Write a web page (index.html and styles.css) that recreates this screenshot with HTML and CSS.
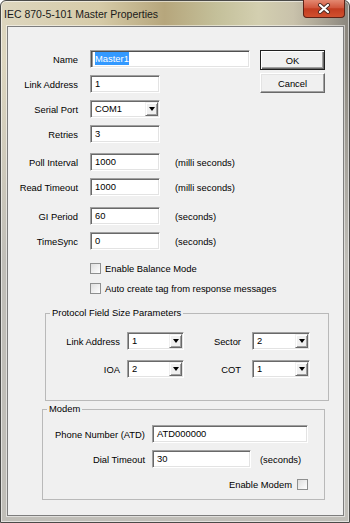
FILE: index.html
```html
<!DOCTYPE html>
<html lang="en">
<head>
    <meta charset="UTF-8">
    <title>IEC 870-5-101 Master Properties</title>
    <link rel="stylesheet" href="styles.css">
</head>
<body>
<div class="window">
    <div class="titlebar">
        <span class="title">IEC 870-5-101 Master Properties</span>
        <div class="close">
            <svg width="14" height="11" viewBox="0 0 14 11">
                <path d="M3 2 L11 9 M11 2 L3 9" stroke="#4b2a22" stroke-width="4" stroke-linecap="round"/>
                <path d="M3 2 L11 9 M11 2 L3 9" stroke="#fff" stroke-width="2.2" stroke-linecap="round"/>
            </svg>
        </div>
    </div>
    <div class="client">
        <div class="top">
            <div class="form">
                <div class="row">
                    <span class="lbl">Name</span>
                    <div class="field focus w160"><span class="selected">Master1</span></div>
                </div>
                <div class="row gap7">
                    <span class="lbl">Link Address</span>
                    <div class="field w70">1</div>
                </div>
                <div class="row gap7">
                    <span class="lbl">Serial Port</span>
                    <div class="field combo w70"><span class="val">COM1</span><span class="arrow"></span></div>
                </div>
                <div class="row gap7">
                    <span class="lbl">Retries</span>
                    <div class="field w70">3</div>
                </div>
                <div class="row gap10">
                    <span class="lbl">Poll Interval</span>
                    <div class="field w70">1000</div>
                    <span class="unit">(milli seconds)</span>
                </div>
                <div class="row gap7">
                    <span class="lbl">Read Timeout</span>
                    <div class="field w70">1000</div>
                    <span class="unit">(milli seconds)</span>
                </div>
                <div class="row gap11">
                    <span class="lbl">GI Period</span>
                    <div class="field w70">60</div>
                    <span class="unit">(seconds)</span>
                </div>
                <div class="row gap7">
                    <span class="lbl">TimeSync</span>
                    <div class="field w70">0</div>
                    <span class="unit">(seconds)</span>
                </div>
            </div>
            <div class="buttons">
                <button class="btn default">OK</button>
                <button class="btn">Cancel</button>
            </div>
        </div>

        <div class="check-row first"><span class="check"></span>Enable Balance Mode</div>
        <div class="check-row"><span class="check"></span>Auto create tag from response messages</div>

        <fieldset class="group proto">
            <legend>Protocol Field Size Parameters</legend>
            <div class="proto-grid">
                <span class="plbl">Link Address</span>
                <div class="field combo"><span class="val">1</span><span class="arrow"></span></div>
                <span class="plbl wide">Sector</span>
                <div class="field combo"><span class="val">2</span><span class="arrow"></span></div>
                <span class="plbl">IOA</span>
                <div class="field combo"><span class="val">2</span><span class="arrow"></span></div>
                <span class="plbl wide">COT</span>
                <div class="field combo"><span class="val">1</span><span class="arrow"></span></div>
            </div>
        </fieldset>

        <fieldset class="group modem">
            <legend>Modem</legend>
            <div class="mrow">
                <span class="mlbl">Phone Number (ATD)</span>
                <div class="field w156">ATD000000</div>
            </div>
            <div class="mrow gap7">
                <span class="mlbl">Dial Timeout</span>
                <div class="field w99">30</div>
                <span class="munit">(seconds)</span>
            </div>
            <div class="enable-row">Enable Modem <span class="check"></span></div>
        </fieldset>
    </div>
</div>
</body>
</html>
```

FILE: styles.css
```css
* {
    box-sizing: border-box;
}
body {
    margin: 0;
    font-family: "Liberation Sans", Arial, sans-serif;
    font-size: 9.4px;
    color: #000;
}
.window {
    width: 350px;
    height: 523px;
    display: flex;
    flex-direction: column;
    padding: 0 5px 6px 6px;
    border: 1px solid #4a4a48;
    border-radius: 6px 6px 0 0;
    background:
        linear-gradient(to bottom, rgba(196,194,188,0) 0, rgba(196,194,188,0) 60px, rgba(192,190,184,1) 260px),
        linear-gradient(90deg, #ddd6bf 0%, #d6cba8 28%, #b6a67c 47%, #c4c09a 62%, #d3cfb0 74%, #c9c2ab 84%, #a39d8f 94%, #8a867e 100%);
    box-shadow: inset 0 0 0 1px rgba(255,255,255,0.55);
}
.titlebar {
    height: 25px;
    margin: 0 -5px 0 -6px;
    display: flex;
    justify-content: space-between;
    align-items: flex-start;
}
.title {
    font-size: 10.5px;
    line-height: 12px;
    padding: 7px 0 0 3px;
    color: #1a1a1a;
}
.close {
    width: 42px;
    height: 18px;
    margin: -1px 4px 0 0;
    border: 1px solid #5e2216;
    border-top: none;
    border-radius: 0 0 4px 4px;
    background-color: #c23c20;
    background-image: linear-gradient(to bottom, rgba(255,200,180,0.55) 0%, rgba(255,170,150,0.25) 45%, rgba(0,0,0,0) 52%, rgba(255,140,90,0.25) 100%);
    display: flex;
    align-items: center;
    justify-content: center;
}
.close svg {
    display: block;
}
.client {
    flex: 1;
    background: #f0f0f0;
    border: 1px solid #7d7d7d;
    box-shadow: 0 0 0 1px rgba(255,255,255,0.5);
}
.top {
    display: flex;
    padding-top: 23px;
}
.form {
    width: 242px;
}
.row {
    display: flex;
    align-items: center;
    height: 18px;
}
.gap7 { margin-top: 7px; }
.gap10 { margin-top: 10px; }
.gap11 { margin-top: 11px; }
.lbl {
    width: 70px;
    text-align: right;
    margin-right: 12px;
}
.unit {
    margin-left: 15px;
}
.field {
    height: 18px;
    background: #fff;
    border: 1px solid;
    border-color: #a0a0a0 #ffffff #ffffff #a0a0a0;
    box-shadow: inset 1px 1px 0 #696969, inset -1px -1px 0 #e3e3e3;
    padding: 0 4px;
    line-height: 16px;
    white-space: nowrap;
    overflow: hidden;
}
.field.focus {
    box-shadow: inset 1px 1px 0 #505050, inset 2px 0 0 #9a9a9a, inset -1px -1px 0 #e3e3e3;
}
.w160 { width: 160px; }
.w70 { width: 70px; }
.w156 { width: 156px; }
.w99 { width: 99px; }
.selected {
    background: #3399ff;
    color: #fff;
    padding: 1px 0;
}
.combo {
    display: flex;
    padding-right: 0;
}
.combo .val {
    flex: 1;
}
.arrow {
    width: 13px;
    height: 14px;
    margin: 1px 1px 1px 0;
    background: #f0f0f0;
    border: 1px solid;
    border-color: #f0f0f0 #696969 #696969 #f0f0f0;
    box-shadow: inset 1px 1px 0 #fff, inset -1px -1px 0 #a0a0a0;
    display: flex;
    align-items: center;
    justify-content: center;
}
.arrow::after {
    content: "";
    border-top: 4px solid #000;
    border-left: 3.5px solid transparent;
    border-right: 3.5px solid transparent;
}
.buttons {
    margin-left: 10px;
    display: flex;
    flex-direction: column;
    gap: 3px;
}
.btn {
    width: 65px;
    height: 20px;
    padding: 0;
    font: inherit;
    color: #000;
    background: #f0f0f0;
    border: 1px solid;
    border-color: #fff #696969 #696969 #fff;
    box-shadow: inset -1px -1px 0 #a0a0a0, inset 1px 1px 0 #e3e3e3;
}
.btn.default {
    border: 1px solid #202020;
    box-shadow: inset 1px 1px 0 #fff, inset -1px -1px 0 #696969, inset -2px -2px 0 #a0a0a0;
}
.check-row {
    display: flex;
    align-items: center;
    height: 11px;
    margin-left: 82px;
    margin-top: 9px;
}
.check-row.first {
    margin-top: 13px;
}
.check {
    width: 11px;
    height: 11px;
    border: 1px solid #8e8f8f;
    background: linear-gradient(135deg, #dedede, #ffffff);
    margin-right: 4px;
    flex: none;
}
.group {
    border: 1px solid #b9b9b9;
    padding: 0;
    min-width: 0;
}
.group legend {
    padding: 0 2px;
    margin-left: 4px;
    line-height: 12px;
}
.proto {
    margin: 13px 14px 0 37px;
    padding-bottom: 22px;
}
.proto-grid {
    display: grid;
    grid-template-columns: 81px 57px 68px 58px;
    row-gap: 10px;
    align-items: center;
    margin-top: 13px;
}
.plbl {
    text-align: right;
    padding-right: 7px;
}
.plbl.wide {
    padding-right: 11px;
}
.modem {
    margin: 2px 18px 0 34px;
    padding: 0 16px 9px 0;
}
.mrow {
    display: flex;
    align-items: center;
    height: 18px;
    margin-top: 10px;
}
.mrow.gap7 {
    margin-top: 7px;
}
.mlbl {
    width: 102px;
    text-align: right;
    margin-right: 7px;
}
.munit {
    margin-left: 9px;
}
.enable-row {
    display: flex;
    justify-content: flex-end;
    align-items: center;
    height: 11px;
    margin-top: 11px;
}
.enable-row .check {
    margin: 0 0 0 5px;
}
```
